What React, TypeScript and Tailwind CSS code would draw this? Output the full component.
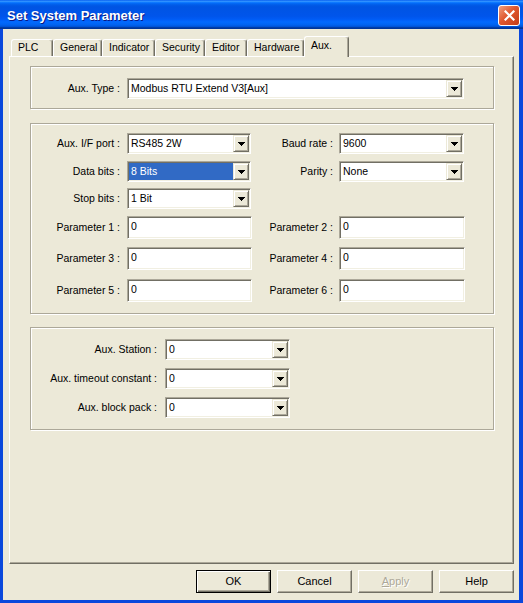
import React from 'react';

const Arrow = () => (
  <svg width="7" height="4" viewBox="0 0 7 4" shapeRendering="crispEdges">
    <path d="M0 0h7v1h-1v1h-1v1h-1v1h-1v-1h-1v-1h-1v-1h-1z" fill="#000" />
  </svg>
);

const Combo = ({ value, className, selected }: { value: string; className: string; selected?: boolean }) => (
  <div
    className={`flex h-[21px] p-px border border-t-[#aca899] border-l-[#aca899] border-r-white border-b-white shadow-[inset_1px_1px_0_#716f64,inset_-1px_-1px_0_#f1efe2] ${className}`}
  >
    <div className={`flex-1 min-w-0 flex items-center pl-[2px] ${selected ? 'bg-[#316ac5] text-white' : 'bg-white'}`}>
      {value}
    </div>
    <div className="w-[16px] h-full flex items-center justify-center bg-[#ece9d8] border border-t-[#ece9d8] border-l-[#ece9d8] border-r-[#716f64] border-b-[#716f64] shadow-[inset_1px_1px_0_#fff,inset_-1px_-1px_0_#aca899]">
      <Arrow />
    </div>
  </div>
);

const TextBox = ({ value, className }: { value: string; className: string }) => (
  <div
    className={`h-[23px] p-px border border-t-[#aca899] border-l-[#aca899] border-r-white border-b-white shadow-[inset_1px_1px_0_#716f64,inset_-1px_-1px_0_#f1efe2] ${className}`}
  >
    <div className="h-full bg-white pl-[2px] pt-[2px] leading-[13px]">{value}</div>
  </div>
);

const tabs = [
  { label: 'PLC', w: 'w-[42px]' },
  { label: 'General', w: 'w-[49px]' },
  { label: 'Indicator', w: 'w-[53px]' },
  { label: 'Security', w: 'w-[50px]' },
  { label: 'Editor', w: 'w-[42px]' },
  { label: 'Hardware', w: 'w-[57px]' },
];

const Button = ({ children, isDefault, disabled }: { children: React.ReactNode; isDefault?: boolean; disabled?: boolean }) => (
  <div
    className={`w-[75px] h-[23px] flex items-center justify-center bg-[#ece9d8] ${
      isDefault
        ? 'border border-black shadow-[inset_1px_1px_0_#fff,inset_-1px_-1px_0_#716f64,inset_-2px_-2px_0_#aca899]'
        : 'border border-t-white border-l-white border-r-[#716f64] border-b-[#716f64] shadow-[inset_-1px_-1px_0_#aca899]'
    } ${disabled ? 'text-[#aca899] [text-shadow:1px_1px_0_#fff]' : 'text-black'}`}
  >
    {children}
  </div>
);

export default function App() {
  return (
    <div className="w-[523px] h-[603px] flex flex-col bg-[#0a48dc] [font-family:'Liberation_Sans',Arial,sans-serif] text-[10.5px] text-black overflow-hidden">
      {/* Title bar */}
      <div className="h-[29px] shrink-0 flex items-start pl-[7px] pr-[3px] bg-[linear-gradient(180deg,#0058ee_0%,#3593ff_4%,#288eff_6%,#127dff_8%,#036ffc_10%,#0262ee_14%,#0057e5_20%,#0054e3_24%,#0055eb_56%,#005bf5_66%,#026afe_76%,#0062ef_86%,#0052d6_92%,#0040ab_94%,#003092_100%)]">
        <span className="flex-1 mt-[8px] text-white font-bold text-[13px] leading-[15px] [text-shadow:1px_1px_0_#0a1883]">
          Set System Parameter
        </span>
        <div className="mt-[5px] w-[22px] h-[21px] rounded-[3px] border border-white bg-[linear-gradient(135deg,#f0a080_0%,#e0582f_45%,#c43c16_100%)] flex items-center justify-center">
          <svg width="11" height="11" viewBox="0 0 11 11">
            <path d="M1.5 1.5l8 8M9.5 1.5l-8 8" stroke="#fff" strokeWidth="2.2" strokeLinecap="square" />
          </svg>
        </div>
      </div>

      {/* Window body */}
      <div className="flex-1 flex flex-col ml-[3px] mr-[4px] mb-[3px] bg-[#ece9d8]">
        {/* Tabs */}
        <div className="h-[27px] shrink-0 flex items-end pl-[8px]">
          {tabs.map((t) => (
            <div
              key={t.label}
              className={`${t.w} h-[17px] flex items-center pl-[6px] rounded-t-[3px] border-t border-l border-r border-t-white border-l-white border-r-[#716f64] shadow-[inset_-1px_0_0_#aca899]`}
            >
              {t.label}
            </div>
          ))}
          <div className="relative z-10 w-[45px] h-[21px] -mb-px flex items-start pt-[1px] pl-[6px] bg-[#ece9d8] rounded-t-[3px] border-t border-l border-r border-t-white border-l-white border-r-[#716f64] shadow-[inset_-1px_0_0_#aca899]">
            Aux.
          </div>
        </div>

        {/* Tab panel */}
        <div className="ml-[6px] mr-[5px] h-[508px] shrink-0 border border-t-white border-l-white border-r-[#716f64] border-b-[#716f64] shadow-[inset_-1px_-1px_0_#aca899] pl-[20px] pt-[9px]">
          {/* Aux type */}
          <div className="w-[464px] h-[43px] border border-[#aca899] shadow-[1px_1px_0_#fff,inset_1px_1px_0_#fff] pt-[11px]">
            <div className="flex items-center h-[21px]">
              <div className="w-[89px] text-right">Aux. Type :</div>
              <Combo className="ml-[7px] w-[337px]" value="Modbus RTU Extend V3[Aux]" />
            </div>
          </div>

          {/* Communication */}
          <div className="mt-[14px] w-[464px] border border-[#aca899] shadow-[1px_1px_0_#fff,inset_1px_1px_0_#fff] pt-[9px] pb-[11px]">
            <div className="flex items-center h-[21px]">
              <div className="w-[89px] text-right">Aux. I/F port :</div>
              <Combo className="ml-[7px] w-[124px]" value="RS485 2W" />
              <div className="w-[82px] text-right">Baud rate :</div>
              <Combo className="ml-[6px] w-[125px]" value="9600" />
            </div>
            <div className="flex items-center h-[21px] mt-[7px]">
              <div className="w-[89px] text-right">Data bits :</div>
              <Combo className="ml-[7px] w-[124px]" value="8 Bits" selected />
              <div className="w-[82px] text-right">Parity :</div>
              <Combo className="ml-[6px] w-[125px]" value="None" />
            </div>
            <div className="flex items-center h-[21px] mt-[6px]">
              <div className="w-[89px] text-right">Stop bits :</div>
              <Combo className="ml-[7px] w-[124px]" value="1 Bit" />
            </div>
            <div className="flex items-center h-[23px] mt-[7px]">
              <div className="w-[89px] text-right">Parameter 1 :</div>
              <TextBox className="ml-[7px] w-[125px]" value="0" />
              <div className="w-[81px] text-right">Parameter 2 :</div>
              <TextBox className="ml-[6px] w-[126px]" value="0" />
            </div>
            <div className="flex items-center h-[23px] mt-[8px]">
              <div className="w-[89px] text-right">Parameter 3 :</div>
              <TextBox className="ml-[7px] w-[125px]" value="0" />
              <div className="w-[81px] text-right">Parameter 4 :</div>
              <TextBox className="ml-[6px] w-[126px]" value="0" />
            </div>
            <div className="flex items-center h-[23px] mt-[9px]">
              <div className="w-[89px] text-right">Parameter 5 :</div>
              <TextBox className="ml-[7px] w-[125px]" value="0" />
              <div className="w-[81px] text-right">Parameter 6 :</div>
              <TextBox className="ml-[6px] w-[126px]" value="0" />
            </div>
          </div>

          {/* Station */}
          <div className="mt-[13px] w-[464px] border border-[#aca899] shadow-[1px_1px_0_#fff,inset_1px_1px_0_#fff] pt-[11px] pb-[11px]">
            <div className="flex items-center h-[21px]">
              <div className="w-[126px] text-right">Aux. Station :</div>
              <Combo className="ml-[8px] w-[125px]" value="0" />
            </div>
            <div className="flex items-center h-[21px] mt-[8px]">
              <div className="w-[126px] text-right">Aux. timeout constant :</div>
              <Combo className="ml-[8px] w-[125px]" value="0" />
            </div>
            <div className="flex items-center h-[21px] mt-[8px]">
              <div className="w-[126px] text-right">Aux. block pack :</div>
              <Combo className="ml-[8px] w-[125px]" value="0" />
            </div>
          </div>
        </div>

        {/* Buttons */}
        <div className="flex justify-end gap-[6px] pr-[5px] mt-[6px] text-[11px]">
          <Button isDefault>OK</Button>
          <Button>Cancel</Button>
          <Button disabled>
            <span>
              <span className="underline">A</span>pply
            </span>
          </Button>
          <Button>Help</Button>
        </div>
      </div>
    </div>
  );
}
